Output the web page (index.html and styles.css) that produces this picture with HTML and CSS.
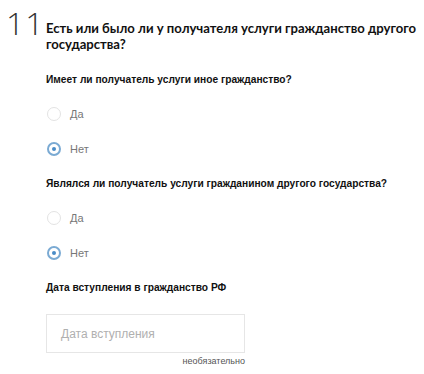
FILE: index.html
```html
<!DOCTYPE html>
<html lang="ru">
<head>
<meta charset="utf-8">
<link rel="stylesheet" href="styles.css">
</head>
<body>
<div class="step">
  <div class="num">11</div>
  <div class="content">
    <h2 class="title">Есть или было ли у получателя услуги гражданство другого государства?</h2>
    <div class="q">Имеет ли получатель услуги иное гражданство?</div>
    <div class="opts">
      <label class="opt"><span class="radio"></span>Да</label>
      <label class="opt"><span class="radio checked"></span>Нет</label>
    </div>
    <div class="q">Являлся ли получатель услуги гражданином другого государства?</div>
    <div class="opts">
      <label class="opt"><span class="radio"></span>Да</label>
      <label class="opt"><span class="radio checked"></span>Нет</label>
    </div>
    <div class="q">Дата вступления в гражданство РФ</div>
    <div class="field">
      <div class="input">Дата вступления</div>
      <div class="hint">необязательно</div>
    </div>
  </div>
</div>
</body>
</html>
```

FILE: styles.css
```css
html, body { margin: 0; padding: 0; background: #fff; }
body { font-family: "Liberation Sans", Arial, sans-serif; color: #000; }
.step { display: flex; padding: 5px 0 0 6px; }
.num {
  width: 40px;
  font-family: "Open Sans", sans-serif;
  font-weight: 300;
  font-size: 32px;
  line-height: 36px;
  color: #333;
  letter-spacing: 1px;
}
.content { display: flex; flex-direction: column; }
.title {
  margin: 15px 0 0 0;
  font-family: Lato, "Open Sans", sans-serif;
  font-weight: 700;
  font-size: 13.1px;
  line-height: 16px;
  color: #111;
  width: 378px;
}
.title + .q { margin-top: 21px; }
.q {
  font-weight: 700;
  font-size: 10.2px;
  line-height: 14px;
  color: #111;
  margin-top: 21px;
}
.opts { display: flex; flex-direction: column; gap: 21px; margin-top: 20px; }
.opt { display: flex; align-items: center; gap: 9px; font-size: 11px; color: #777; height: 14px; }
.radio {
  width: 14px; height: 14px; box-sizing: border-box;
  border: 1px solid #e3e3e3; border-radius: 50%;
  margin-left: 1px;
  position: relative;
}
.radio.checked { border: 2px solid #7aaad3; }
.radio.checked::after {
  content: ""; position: absolute; left: 3px; top: 3px;
  width: 4px; height: 4px; border-radius: 50%; background: #4a8cc7;
}
.field { display: flex; flex-direction: column; width: 199px; margin-top: 19px; }
.input {
  height: 39px; box-sizing: border-box;
  border: 1px solid #e6e6e6;
  padding-left: 14px;
  display: flex; align-items: center;
  font-size: 12px; color: #b0b0b0;
}
.hint { align-self: flex-end; font-size: 9px; color: #555; margin-top: 3px; }
```
